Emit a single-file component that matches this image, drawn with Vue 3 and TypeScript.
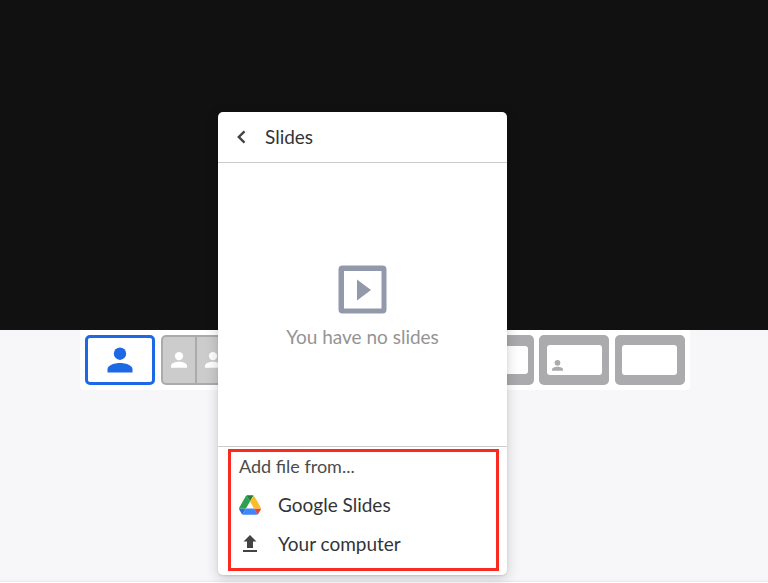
<script setup lang="ts">
import { ref } from 'vue'

type LayoutKind = 'solo' | 'split' | 'wide' | 'corner' | 'full'

interface LayoutOption {
  id: number
  label: string
  kind: LayoutKind
}

const layouts: LayoutOption[] = [
  { id: 1, label: 'Solo', kind: 'solo' },
  { id: 2, label: 'Two people', kind: 'split' },
  { id: 3, label: 'Group', kind: 'split' },
  { id: 4, label: 'Spotlight', kind: 'split' },
  { id: 5, label: 'News', kind: 'split' },
  { id: 6, label: 'Screen', kind: 'wide' },
  { id: 7, label: 'Picture in picture', kind: 'corner' },
  { id: 8, label: 'Cinema', kind: 'full' },
]

const selected = ref(1)
const open = ref(true)
</script>

<template>
  <main class="studio">
    <section class="stage"></section>
    <section class="controls">
      <nav class="layouts">
        <button
          v-for="item in layouts"
          :key="item.id"
          type="button"
          class="layout"
          :class="[item.kind, { selected: item.id === selected }]"
          :aria-label="item.label"
          @click="selected = item.id"
        >
          <svg v-if="item.kind === 'solo'" class="person-large" viewBox="0 0 26 26">
            <circle cx="13" cy="6.7" r="6.2" />
            <path d="M.5 25.500v-3.200C.5 18 8 16 13 16s12.500 2 12.500 6.300v3.200z" />
          </svg>
          <template v-else-if="item.kind === 'split'">
            <span v-for="n in 2" :key="n" class="half">
              <svg class="person-small" viewBox="0 0 26 26">
                <circle cx="13" cy="6.700" r="6.700" />
                <path d="M0 25.500v-3.200C0 18 8 16 13 16s13 2 13 6.300v3.200z" />
              </svg>
            </span>
          </template>
          <span v-else class="screen">
            <svg v-if="item.kind === 'corner'" class="person-mini" viewBox="0 0 26 26">
              <circle cx="13" cy="6.700" r="6.700" />
              <path d="M0 25.500v-3.200C0 18 8 16 13 16s13 2 13 6.300v3.200z" />
            </svg>
          </span>
        </button>
      </nav>
    </section>
    <footer class="edge"></footer>

    <section v-if="open" class="popover" aria-labelledby="slides-title">
      <header class="head">
        <button type="button" class="back" aria-label="Back" @click="open = false">
          <svg viewBox="0 0 11 14"><path d="M8.500 1.300 2.800 7l5.700 5.700" /></svg>
        </button>
        <h1 id="slides-title">Slides</h1>
      </header>
      <div class="empty">
        <svg class="slides-icon" viewBox="0 0 50 50">
          <path fill-rule="evenodd" d="M4.500 0.500h40a4 4 0 0 1 4 4v40a4 4 0 0 1-4 4h-40a4 4 0 0 1-4-4v-40a4 4 0 0 1 4-4zM6 6v37.500h37.500V6zM19 14.500v21l14-10.500z" />
        </svg>
        <p>You have no slides</p>
      </div>
      <div class="sources">
        <h2>Add file from...</h2>
        <button type="button" class="source">
          <svg class="drive" viewBox="0 0 87.300 78">
            <path fill="#2a6fe0" d="m6.600 66.850 3.850 6.650c.8 1.400 1.950 2.500 3.300 3.300l13.750-23.800h-27.500c0 1.550.4 3.100 1.200 4.500z" />
            <path fill="#2f9f50" d="m43.650 25-13.750-23.800c-1.350.8-2.500 1.900-3.300 3.300l-25.400 44a9.060 9.060 0 0 0-1.200 4.500h27.500z" />
            <path fill="#ea4335" d="m73.550 76.800c1.350-.8 2.500-1.900 3.300-3.300l1.600-2.750 7.650-13.250c.8-1.400 1.200-2.950 1.200-4.500h-27.500l5.850 11.500z" />
            <path fill="#1d8040" d="m43.650 25 13.750-23.800c-1.350-.8-2.900-1.200-4.500-1.200h-18.500c-1.600 0-3.150.45-4.500 1.200z" />
            <path fill="#4285f4" d="m59.800 53h-32.300l-13.750 23.800c1.350.8 2.900 1.200 4.500 1.200h50.800c1.600 0 3.150-.45 4.500-1.200z" />
            <path fill="#fbbc2c" d="m73.400 26.500-12.700-22c-.8-1.400-1.950-2.500-3.300-3.300l-13.750 23.800 16.150 28h27.450c0-1.550-.4-3.100-1.200-4.500z" />
          </svg>
          <span>Google Slides</span>
        </button>
        <button type="button" class="source">
          <svg class="upload" viewBox="0 0 14 17">
            <path d="M7 0 .5 6.500H4V13h6V6.500h3.500zM0 15h14v2H0z" />
          </svg>
          <span>Your computer</span>
        </button>
      </div>
    </section>
  </main>
</template>

<style>
body {
  margin: 0;
}
</style>

<style scoped>
.studio {
  position: relative;
  display: grid;
  grid-template-rows: 330px 1fr 1px;
  min-height: 100vh;
  background: #f7f7fa;
  color: #333436;
  font-family: Lato, 'Liberation Sans', sans-serif;
  overflow: hidden;
}

.stage {
  background: #111;
}

.controls {
  display: flex;
  justify-content: center;
  align-items: flex-start;
  padding-left: 2px;
}

.edge {
  background: #fff;
  box-shadow: 0 -1px 2px rgba(0, 0, 0, 0.1);
}

button {
  font: inherit;
  color: inherit;
  border: 0;
  padding: 0;
  background: none;
  cursor: pointer;
}

svg {
  display: block;
  flex: none;
}

.layouts {
  box-sizing: border-box;
  display: flex;
  justify-content: space-between;
  width: 610px;
  padding: 5px;
  border-radius: 0 0 4px 4px;
  background: #fff;
}

.layout {
  box-sizing: border-box;
  display: flex;
  align-items: center;
  justify-content: center;
  width: 70px;
  height: 50px;
  border-radius: 5px;
  background: #ababad;
}

.layout.selected {
  border: 3px solid #1d69e5;
  background: #fff;
}

.person-large {
  width: 26px;
  height: 26px;
  fill: #1d69e5;
}

.split {
  gap: 2px;
  padding: 2px;
}

.half {
  display: flex;
  flex: 1;
  align-items: center;
  justify-content: center;
  height: 46px;
  border-radius: 3px 0 0 3px;
  background: #ccc;
}

.half + .half {
  border-radius: 0 3px 3px 0;
}

.person-small {
  width: 16px;
  height: 16px;
  fill: #fff;
}

.screen {
  box-sizing: border-box;
  display: flex;
  align-items: flex-end;
  width: 55px;
  height: 30px;
  padding: 4px 5px;
  border-radius: 3px;
  background: #fff;
}

.wide .screen {
  width: 58px;
  height: 28px;
}

.person-mini {
  width: 11px;
  height: 11px;
  fill: #ababad;
}

.popover {
  position: absolute;
  left: calc(50% - 166px);
  bottom: 8px;
  width: 289px;
  border-radius: 5px;
  background: #fff;
  box-shadow: 0 1px 2px rgba(0, 0, 0, 0.1), 0 4px 14px rgba(0, 0, 0, 0.18);
}

.head {
  display: flex;
  align-items: center;
  gap: 18px;
  height: 50px;
  padding-left: 18px;
  border-bottom: 1px solid #ccc;
}

.back svg {
  width: 11px;
  height: 14px;
  fill: none;
  stroke: #424345;
  stroke-width: 2.4;
}

h1,
h2,
p {
  margin: 0;
  font-weight: 400;
}

h1 {
  font-size: 19px;
  line-height: 24px;
}

.empty {
  box-sizing: border-box;
  display: flex;
  flex-direction: column;
  align-items: center;
  justify-content: center;
  gap: 10px;
  height: 284px;
  padding-top: 4px;
  border-bottom: 1px solid #ccc;
}

.slides-icon {
  width: 50px;
  height: 50px;
  fill: #9299aa;
}

.empty p {
  color: #949494;
  font-size: 19px;
  line-height: 24px;
}

.sources {
  margin: 2px 8px 4px 10px;
  padding: 2px 8px 5px;
  border: 3px solid #fb2a20;
}

h2 {
  margin-bottom: 7px;
  color: #4b4c4e;
  font-size: 18px;
  line-height: 24px;
}

.source {
  display: grid;
  grid-template-columns: 22px 1fr;
  align-items: center;
  gap: 17px;
  width: 100%;
  height: 39px;
  text-align: left;
  font-size: 19px;
  line-height: 24px;
}

.drive {
  width: 22px;
  height: 20px;
}

.upload {
  width: 14px;
  height: 17px;
  justify-self: center;
  fill: #424345;
}
</style>
